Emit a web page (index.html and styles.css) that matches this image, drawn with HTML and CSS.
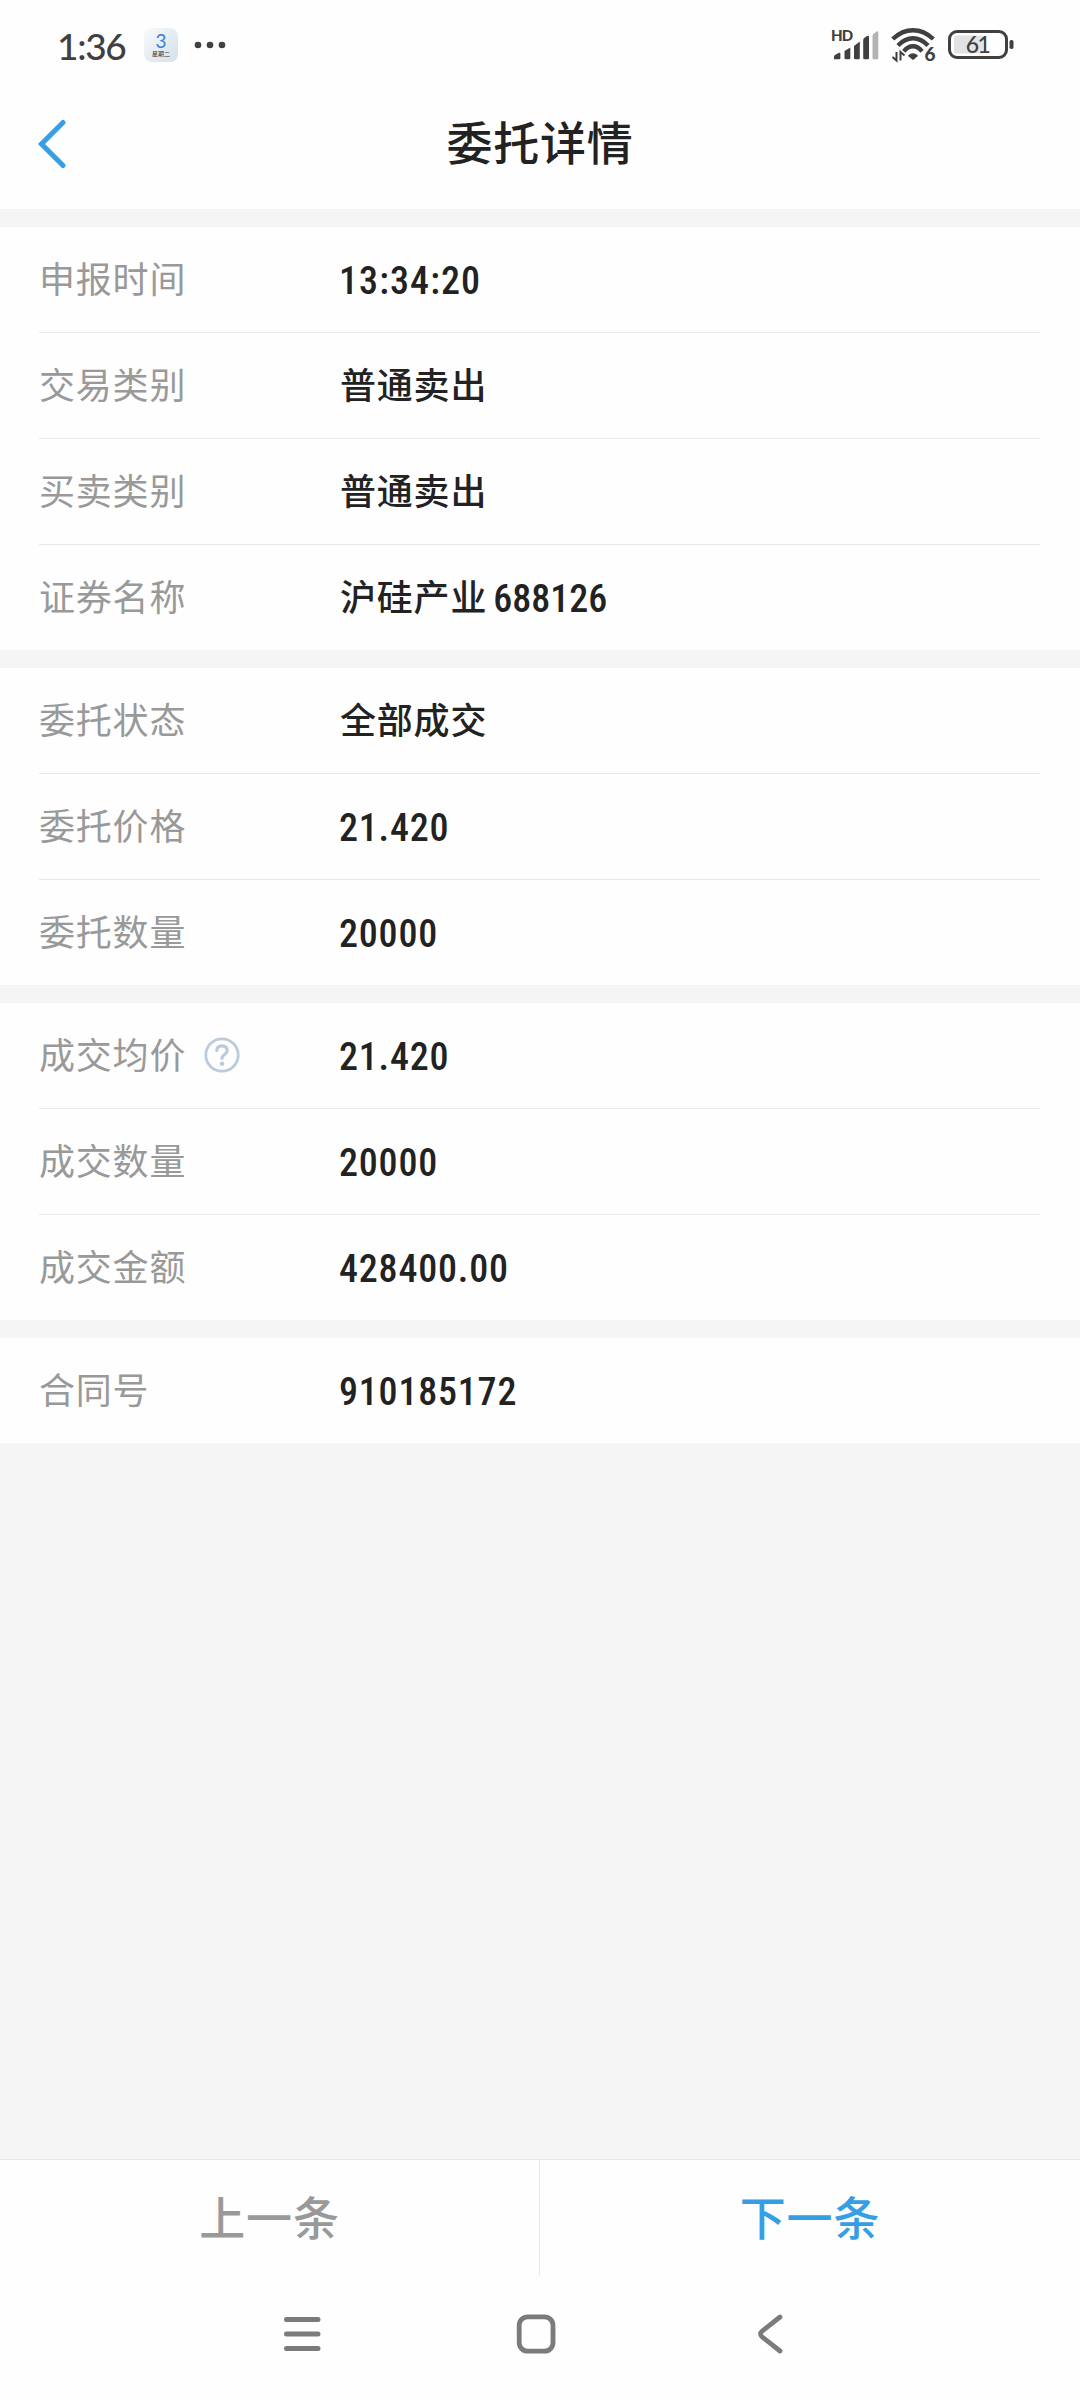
FILE: index.html
```html
<!DOCTYPE html>
<html lang="zh-CN">
<head>
    <meta charset="UTF-8">
    <title>委托详情</title>
    <link rel="stylesheet" href="styles.css">
</head>
<body>
    <div class="status_bar">
        <span class="clock">1:36</span>
        <div class="calendar">
            <span class="calendar_day">3</span>
            <span class="calendar_week">星期二</span>
        </div>
        <svg class="dots" width="32" height="8" viewBox="0 0 32 8" fill="#404040">
            <circle cx="4" cy="4" r="3.3"/>
            <circle cx="16" cy="4" r="3.3"/>
            <circle cx="28" cy="4" r="3.3"/>
        </svg>

        <!-- signal -->
        <svg class="signal" width="50" height="38" viewBox="-2 -2 50 38" fill="#404040">
            <text x="-1" y="13" class="hd">HD</text>
            <path d="M2 31v-2.500q0-1 1-1.500l4-2.200q1.400-.5 1.400 1V30q0 1.300-1.300 1.300H3.300Q2 31.300 2 31z"/>
            <path d="M12.500 23l5.800-3.600V30q0 1.300-1.300 1.300h-3.200q-1.300 0-1.300-1.300z"/>
            <path d="M22 18l5.800-4.500V30q0 1.300-1.300 1.300h-3.200Q22 31.300 22 30z"/>
            <path d="M31.200 12q0-1.200 1-2l2.800-2q2-1 2 1v21q0 1.300-1.300 1.300h-3.200q-1.300 0-1.300-1.300z"/>
            <path fill="#b3b3b3" d="M40.500 8q0-1.500 1.200-2.300l2.800-2.200q1.800-1 1.800 1V30q0 1.300-1.300 1.300h-3.200q-1.300 0-1.300-1.300z"/>
        </svg>

        <!-- wifi -->
        <svg class="wifi" width="48" height="44" viewBox="0 -4 48 44">
            <g fill="none" stroke="#404040" stroke-width="4.400">
                <path d="M1.700 12Q11 3.200 22 3.200T42.300 12"/>
                <path d="M7 18.500Q14 11.300 22 11.300T37 18.500"/>
                <path d="M12.800 24.300Q17 19.300 22 19.300T31 24.300"/>
            </g>
            <path fill="#404040" d="M17.500 28q4.500-3.600 9 0q.5.600 0 1.200L22.800 32.500q-.8.700-1.600 0L17.500 29.200q-.5-.6 0-1.200z"/>
            <path fill="none" stroke="#404040" stroke-width="2" d="M5.500 25v8.500l-4-3.500M9.500 33.500V25l4 3.500"/>
            <text x="33.500" y="34" class="wifi_number">6</text>
        </svg>

        <!-- battery -->
        <svg class="battery" width="66" height="30" viewBox="0 0 66 30">
            <rect x="1.500" y="1.500" width="57" height="26" rx="7.500" fill="none" stroke="#404040" stroke-width="3"/>
            <path fill="#e3e3e3" d="M9 5.500h26v18H9q-3 0-3-3v-12q0-3 3-3z"/>
            <rect x="61.500" y="10" width="4" height="9" rx="1.800" fill="#404040"/>
            <text x="29.500" y="22.500" class="battery_text">61</text>
        </svg>
    </div>

    <div class="header">
        <svg class="back" width="30" height="50" viewBox="0 0 30 50" fill="none" stroke="#369ee2" stroke-width="5" stroke-linecap="round">
            <path d="M26 3.500L4.500 25L26 46.500"/>
        </svg>
        <h1>委托详情</h1>
    </div>

    <div class="content">
        <div class="group">
            <div class="row"><span class="label">申报时间</span><span class="number time">13:34:20</span></div>
            <div class="row"><span class="label">交易类别</span><span class="value">普通卖出</span></div>
            <div class="row"><span class="label">买卖类别</span><span class="value">普通卖出</span></div>
            <div class="row"><span class="label">证券名称</span><span class="value">沪硅产业</span><span class="number code">688126</span></div>
        </div>

        <div class="group">
            <div class="row"><span class="label">委托状态</span><span class="value">全部成交</span></div>
            <div class="row"><span class="label">委托价格</span><span class="number">21.420</span></div>
            <div class="row"><span class="label">委托数量</span><span class="number">20000</span></div>
        </div>

        <div class="group">
            <div class="row">
                <span class="label">成交均价
                    <svg class="help" width="36" height="36" viewBox="0 0 36 36" fill="none" stroke="#bccbdb" stroke-width="2.800">
                        <circle cx="18" cy="18" r="16.200"/>
                        <path stroke-width="3.200" stroke-linecap="round" d="M12.800 13.500q.3-4.700 5.200-4.700t5.200 4.700q0 2.200-2.600 4t-2.600 3.800"/>
                        <circle cx="18" cy="26.800" r="2.300" fill="#bccbdb" stroke="none"/>
                    </svg>
                </span>
                <span class="number">21.420</span>
            </div>
            <div class="row"><span class="label">成交数量</span><span class="number">20000</span></div>
            <div class="row"><span class="label">成交金额</span><span class="number">428400.00</span></div>
        </div>

        <div class="group">
            <div class="row"><span class="label">合同号</span><span class="number">910185172</span></div>
        </div>
    </div>

    <div class="pager">
        <div class="pager_button prev">上一条</div>
        <div class="pager_button next">下一条</div>
    </div>

    <div class="nav_bar">
        <svg width="40" height="40" viewBox="0 0 40 40" fill="none" stroke="#7b7b7b" stroke-width="5" stroke-linecap="round">
            <path d="M4.500 5.500h31.500M4.500 20h31.500M4.500 34.500h31.500"/>
        </svg>
        <svg width="40" height="40" viewBox="0 0 40 40" fill="none" stroke="#7b7b7b" stroke-width="4.800">
            <rect x="3.200" y="2.800" width="33.800" height="34.400" rx="8.500"/>
        </svg>
        <svg width="40" height="40" viewBox="0 0 40 40" fill="none" stroke="#7b7b7b" stroke-width="4.800" stroke-linecap="round">
            <path d="M30 3L12 17.200Q9 20 12 22.800L30 37"/>
        </svg>
    </div>
</body>
</html>
```

FILE: styles.css
```css
body {
    margin: 0;
    width: 1080px;
    height: 2400px;
    display: flex;
    flex-direction: column;
    background: #fefefe;
    font-family: Roboto, "Noto Sans CJK SC", sans-serif;
    color: #222;
}

.status_bar {
    height: 90px;
    box-sizing: border-box;
    padding: 0 66px 0 57px;
    display: flex;
    align-items: center;
}

.clock {
    width: 87px;
    font-family: Lato, sans-serif;
    font-size: 37px;
    font-weight: 500;
    letter-spacing: -1.3px;
    color: #404040;
}

.calendar {
    width: 34px;
    height: 34px;
    border-radius: 8px;
    background: linear-gradient(135deg, #f8fafb, #d3e0e9);
    display: flex;
    flex-direction: column;
    align-items: center;
}

.calendar_day {
    padding-top: 3px;
    font-family: Lato, sans-serif;
    font-size: 19px;
    line-height: 19px;
    color: #3d80cf;
}

.calendar_week {
    font-size: 6px;
    line-height: 7px;
    color: #333;
}

.dots {
    margin-left: 16px;
}

.signal {
    margin-left: auto;
    margin-right: 11px;
}

.hd {
    font-family: Lato, sans-serif;
    font-size: 15px;
    font-weight: 900;
    letter-spacing: -0.8px;
}

.wifi {
    margin-right: 9px;
}

.wifi_number {
    font-family: Lato, sans-serif;
    font-size: 19px;
    font-weight: 900;
    fill: #404040;
}

.battery_text {
    font-family: Lato, sans-serif;
    font-size: 23px;
    font-weight: 500;
    letter-spacing: -1.5px;
    text-anchor: middle;
    fill: #404040;
}

.header {
    height: 119px;
    display: flex;
    align-items: flex-start;
}

.back {
    width: 30px;
    margin: 29px 0 0 37px;
}

.header h1 {
    flex-grow: 1;
    margin: 19px 67px 0 0;
    text-align: center;
    font-size: 46px;
    line-height: 70px;
    font-weight: 500;
    letter-spacing: 0.8px;
}

.content {
    flex-grow: 1;
    background: #f5f5f5;
}

.group {
    margin-top: 18px;
    padding: 0 40px 0 39px;
    background: #fefefe;
}

.row {
    height: 105px;
    display: flex;
    align-items: center;
    font-size: 36px;
    letter-spacing: 0.8px;
}

.row + .row {
    border-top: 1px solid #e8e8e8;
}

.label {
    width: 301px;
    height: 99px;
    margin-bottom: 6px;
    display: flex;
    align-items: center;
    color: #999;
}

.help {
    margin: 5px 0 0 18px;
}

.value {
    margin-bottom: 6px;
    font-weight: 500;
}

.number {
    padding-top: 3px;
    margin-left: -1px;
    font-size: 38px;
    font-weight: 500;
    font-stretch: 85%;
    letter-spacing: 0.8px;
}

.time {
    letter-spacing: 1.1px;
}

.code {
    margin-left: 6px;
    letter-spacing: 0;
}

.pager {
    height: 116px;
    display: flex;
    border-top: 1px solid #e6e6e6;
}

.pager_button {
    text-align: center;
    font-size: 46px;
    line-height: 118px;
    font-weight: 500;
    letter-spacing: 0.8px;
}

.prev {
    width: 539px;
    color: #999;
}

.next {
    flex-grow: 1;
    border-left: 1px solid #e8e8e8;
    color: #369ee2;
}

.nav_bar {
    height: 124px;
    box-sizing: border-box;
    padding: 38px 290px 0 282px;
    display: flex;
    justify-content: space-between;
    align-items: flex-start;
}
```
